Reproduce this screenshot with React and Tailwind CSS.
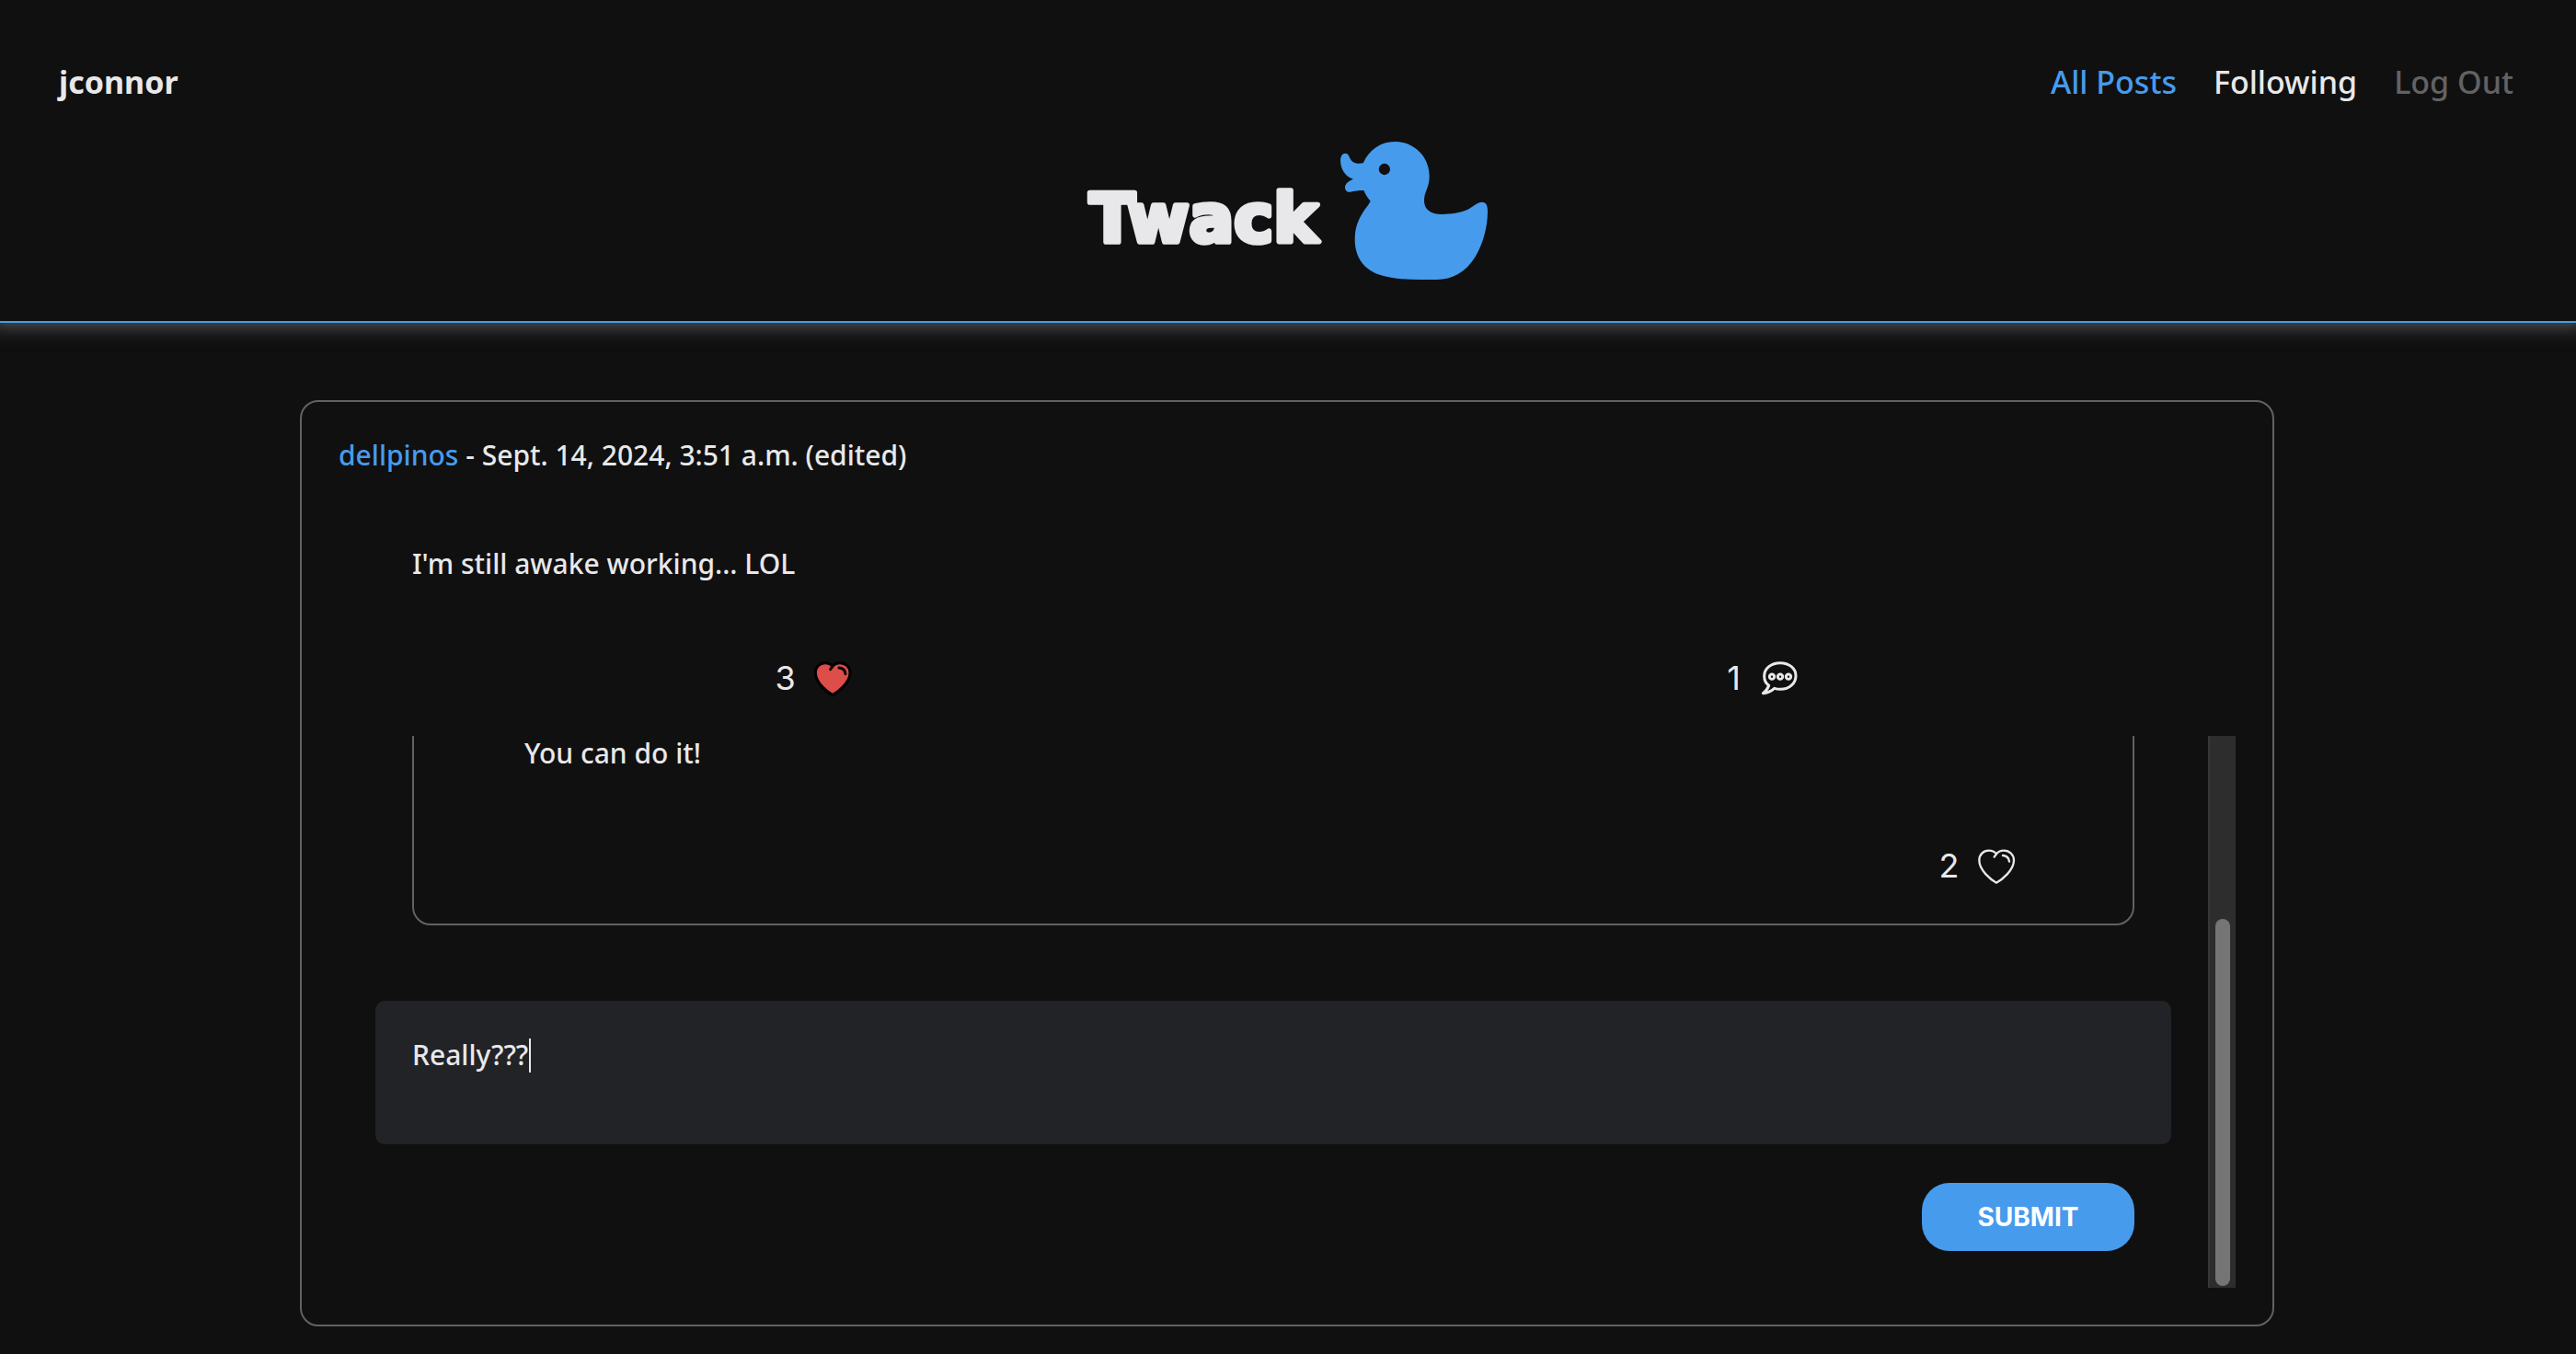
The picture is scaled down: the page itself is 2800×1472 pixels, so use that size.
import React from 'react';

function Logo() {
  return (
    <svg viewBox="60 72 1320 450" className="h-[150px] w-[440px]" role="img" aria-label="Twack">
      <text
        x="73"
        y="400"
        fontFamily="'DejaVu Sans', sans-serif"
        fontWeight="700"
        fontSize="217"
        fill="#e8e8ea"
        stroke="#e8e8ea"
        strokeWidth="17"
        strokeLinejoin="round"
      >
        Twack
      </text>
      <path
        fill="#479bec"
        fillRule="evenodd"
        d="M965 142 C985 98 1022 72 1068 72 C1132 72 1181 122 1181 184 C1181 204 1177 218 1170 234 C1166 244 1164 254 1164 265 C1164 293 1184 309 1222 309 C1252 309 1282 304 1303 295 C1321 286 1336 270 1353 269 C1366 269 1371 279 1371 299 C1371 350 1356 405 1331 447 C1301 497 1255 522 1206 522 L1150 522 C1100 522 1050 518 1012 504 C965 486 938 446 938 391 C938 352 950 323 970 294 C978 283 983 277 989 266 C981 256 974 248 967 231 C950 231 936 233 923 236 C912 238 905 229 906 219 C908 208 918 200 933 194 C908 187 891 161 891 134 C891 119 897 110 907 110 C916 110 919 119 922 126 C930 143 946 145 965 142 Z M1053 162 A18.500 18.500 0 1 0 1016 162 A18.500 18.500 0 1 0 1053 162 Z"
      />
    </svg>
  );
}

function Heart({ filled }) {
  const line = filled ? '#000000' : '#e8e8ea';
  const width = filled ? 9 : 7;
  return (
    <svg viewBox="18 18 120 120" className="size-10 overflow-visible" aria-hidden="true">
      <g stroke={line} strokeWidth={width} strokeLinecap="round" strokeLinejoin="round" fill="none">
        <path
          fill={filled ? '#dd4d49' : 'none'}
          d="M78 134 C60 124 22 94 22 61 C22 42 36 29 53 29 C63 29 72 33 78 40 C84 33 93 29 102 29 C121 29 135 43 135 61 C135 94 96 124 78 134 Z"
        />
        <path d="M78 40 L71 50" />
        <path d="M99 45 C111 46 119 54 120 65" />
      </g>
    </svg>
  );
}

function Comment() {
  return (
    <svg viewBox="18 18 120 120" className="size-10 overflow-visible" aria-hidden="true">
      <g stroke="#e8e8ea" fill="none" strokeLinejoin="round">
        <path
          strokeWidth="9"
          d="M38 103 C28 96 23 84 23 72 C23 47 46 29 75 29 C104 29 126 47 126 71 C126 96 104 115 76 115 C69 115 62 114 56 112 C46 121 33 127 19 128 C28 122 34 113 38 103 Z"
        />
        <circle cx="48" cy="74" r="8" strokeWidth="9" />
        <circle cx="75" cy="74" r="8" strokeWidth="9" />
        <circle cx="102" cy="74" r="8" strokeWidth="9" />
      </g>
    </svg>
  );
}

function Count({ label, value, children }) {
  return (
    <button
      type="button"
      aria-label={label}
      className="flex h-12 items-center gap-5 font-['Inter',sans-serif] text-[36px] leading-[48px] font-normal"
    >
      <span className="min-w-[23px] text-center">{value}</span>
      {children}
    </button>
  );
}

export default function App() {
  return (
    <div className="min-h-screen overflow-x-clip bg-[#101010] font-['Noto_Sans',sans-serif] text-[30px] leading-10 font-medium text-[#e8e8ea]">
      <header className="flex flex-col items-center border-b-2 border-[#479bec] pt-16 pb-[45px] shadow-[0_-8px_20px_10px_#636467]">
        <div className="flex w-full items-center justify-between pr-[68px] pl-16 text-[34px] leading-[50px]">
          <a href="#profile" className="font-bold">jconnor</a>
          <nav className="flex gap-10">
            <a href="#all" className="text-[#479bec]">All Posts</a>
            <a href="#following">Following</a>
            <a href="#logout" className="text-[#626264]">Log Out</a>
          </nav>
        </div>
        <a href="#home" className="mt-10">
          <Logo />
        </a>
      </header>

      <main className="mx-auto mt-[84px] max-w-[2148px] pr-[2px]">
        <article className="rounded-[20px] border-2 border-[#626264] px-10 pt-[38px] pb-10">
          <p>
            <a href="#dellpinos" className="text-[#479bec]">dellpinos</a> - Sept. 14, 2024, 3:51 a.m. (edited)
          </p>
          <p className="mt-[78px] px-20">I'm still awake working... LOL</p>
          <div className="mt-20 grid grid-cols-2 justify-items-center">
            <Count label="3 likes" value="3"><Heart filled /></Count>
            <Count label="1 comment" value="1"><Comment /></Count>
          </div>

          <div className="mt-[39px] flex h-[600px]">
            <div className="flex min-w-0 flex-1 flex-col justify-end overflow-hidden">
              <section className="mx-20 rounded-[20px] border-2 border-[#626264] pt-[120px] pr-32 pb-[39px] pl-[120px]">
                <p className="leading-9">You can do it!</p>
                <div className="mt-20 flex justify-end">
                  <Count label="2 likes" value="2"><Heart /></Count>
                </div>
              </section>
              <form className="mt-[82px] flex flex-col px-10 pb-10">
                <div className="relative flex">
                  <textarea
                    aria-label="Comment"
                    defaultValue="Really???"
                    className="h-[156px] w-full resize-none rounded-[10px] bg-[#222327] px-10 pt-[39px] leading-10 caret-transparent outline-none"
                  />
                  <span aria-hidden="true" className="absolute top-[41px] left-[167px] h-[37px] w-[2px] bg-[#e8e8ea]" />
                </div>
                <button
                  type="button"
                  className="mt-[42px] mr-10 h-[74px] w-[231px] self-end rounded-[30px] bg-[#479bec] font-['Inter',sans-serif] text-[28px] font-bold text-white"
                >
                  SUBMIT
                </button>
              </form>
            </div>
            <div className="flex w-[30px] flex-col justify-end border-l-2 border-[#373737] bg-[#2d2d2d] pb-[2px] pl-[6px]">
              <div className="h-[399px] w-4 rounded-full bg-[#757575]" />
            </div>
          </div>
        </article>
      </main>
    </div>
  );
}
